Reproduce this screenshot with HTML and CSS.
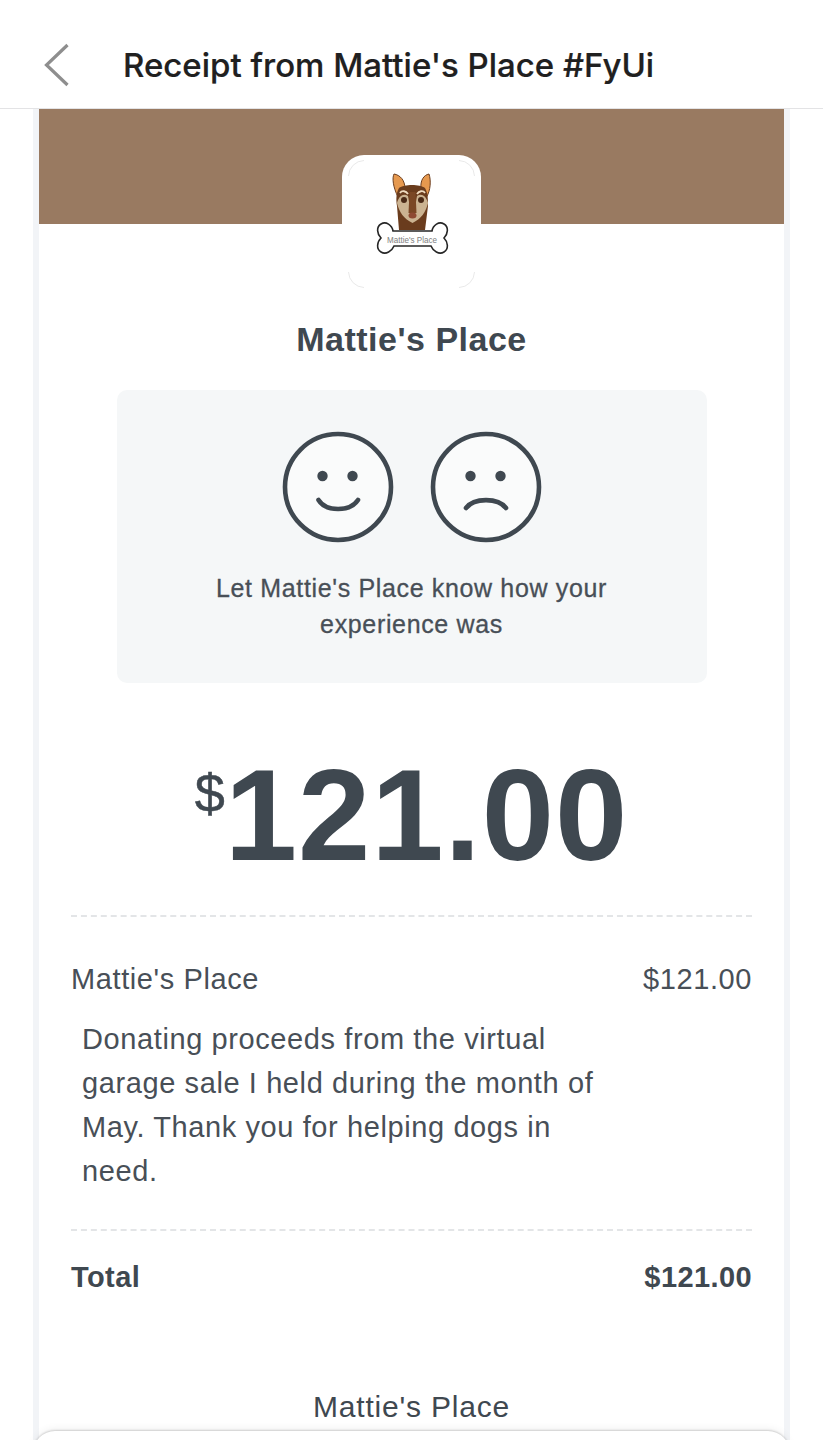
FILE: index.html
```html
<!DOCTYPE html>
<html lang="en">

<head>
    <meta charset="UTF-8">
    <meta name="viewport" content="width=device-width, initial-scale=1.0">
    <title>Receipt from Mattie's Place #FyUi</title>
    <link rel="stylesheet" href="styles.css">
</head>

<body>
    <header class="top-bar">
        <svg class="back-icon" width="26" height="44" viewBox="0 0 26 44">
            <path d="M23.500 2 L2.500 22 L23.500 42" fill="none" stroke="#8e8e8e" stroke-width="3.200" />
        </svg>
        <h1>Receipt from Mattie's Place #FyUi</h1>
    </header>

    <div class="receipt-frame">
        <div class="receipt">
            <div class="banner"></div>
            <div class="logo-box">
                <svg width="127" height="128" viewBox="348 160 127 128">
                    <!-- faint corners of the logo image -->
                    <path d="M348.500 176 A16 16 0 0 1 364 160.500 M459 160.500 A16 16 0 0 1 474.500 176 M474.500 272 A16 16 0 0 1 459 287.500 M364 287.500 A16 16 0 0 1 348.500 272" fill="none" stroke="#e9e9e9" />
                    <!-- bone -->
                    <path d="M393 231 C392 225 386 221 381 224 C376 227 377 234 381 238 C377 242 376 249 381 252 C386 255 392 251 394 246 L431 246 C433 251 439 255 444 252 C449 249 448 242 444 238 C448 234 449 227 444 224 C439 221 433 225 432 231 Z" fill="#fff" stroke="#262626" stroke-width="1.600" />
                    <!-- ears -->
                    <path d="M398 197 C393 187 392 178 394 174 C400 175 405 180 405 189 Z" fill="#e6994f" stroke="#6b3d1e" />
                    <path d="M421 189 C420 180 424 175 429 174 C431 180 431 190 426 198 Z" fill="#e6994f" stroke="#6b3d1e" />
                    <!-- head -->
                    <path d="M399 188 C404 184 420 184 425 188 C428 193 428 200 428 206 L425 230 L399 230 L397 206 C396 200 396 193 399 188 Z" fill="#6a3c1d" />
                    <path d="M397 203 C399 195 404 193 408 196 C409 200 409 204 410 208 L415 208 C416 204 416 200 417 196 C421 193 426 195 428 203 C426 212 421 219 412.500 223 C404 219 399 212 397 203 Z" fill="#cbb391" />
                    <path d="M409.500 192 L415.500 192 L416.500 213 L408.500 213 Z" fill="#7a4724" />
                    <path d="M400 193 C402 190 406 191 408 194 M417 194 C419 191 423 190 425 193" fill="none" stroke="#f0dcc0" stroke-width="1.800" />
                    <circle cx="404" cy="200" r="3" fill="#4a2a16" />
                    <circle cx="421" cy="200" r="3" fill="#4a2a16" />
                    <ellipse cx="412.500" cy="215.500" rx="4" ry="3" fill="#8e4a32" />
                    <!-- name on the bone -->
                    <text class="bone-text" x="387" y="243" textLength="50" lengthAdjust="spacingAndGlyphs">Mattie's Place</text>
                </svg>
            </div>
            <h2 class="merchant-name">Mattie's Place</h2>

            <section class="feedback">
                <div class="faces">
                    <svg width="112" height="112" viewBox="0 0 112 112">
                        <circle cx="56" cy="56" r="53" fill="#fafbfb" stroke="#3f4850" stroke-width="4.600" />
                        <circle cx="40.500" cy="45" r="5.200" fill="#3f4850" />
                        <circle cx="70.500" cy="45" r="5.200" fill="#3f4850" />
                        <path d="M36.500 69 C44 81 68 81 76 69" fill="none" stroke="#3f4850" stroke-width="4.600" stroke-linecap="round" />
                    </svg>
                    <svg width="112" height="112" viewBox="0 0 112 112">
                        <circle cx="56" cy="56" r="53" fill="#fafbfb" stroke="#3f4850" stroke-width="4.600" />
                        <circle cx="40.500" cy="45" r="5.200" fill="#3f4850" />
                        <circle cx="70.500" cy="45" r="5.200" fill="#3f4850" />
                        <path d="M36 77 C44 66.500 68 66.500 76 77" fill="none" stroke="#3f4850" stroke-width="4.600" stroke-linecap="round" />
                    </svg>
                </div>
                <p>Let Mattie's Place know how your<br>experience was</p>
            </section>

            <div class="amount"><span class="currency">$</span>121.00</div>

            <div class="line-item">
                <div class="row">
                    <span>Mattie's Place</span>
                    <span>$121.00</span>
                </div>
                <p class="note">Donating proceeds from the virtual garage sale I held during the month of May. Thank you for helping dogs in need.</p>
            </div>

            <div class="row total">
                <span>Total</span>
                <span>$121.00</span>
            </div>

            <div class="footer-name">Mattie's Place</div>
        </div>
    </div>
    <div class="bottom-sheet"></div>
</body>

</html>
```

FILE: styles.css
```css
html,
body {
    height: 1440px;
    overflow: hidden;
}

body {
    font-family: 'Liberation Sans', Arial, sans-serif;
    margin: 0;
    padding: 0;
    background-color: #fff;
    color: #3f4850;
    position: relative;
}

.top-bar {
    height: 86px;
    border-bottom: 1px solid #e3e3e5;
    display: flex;
    align-items: center;
    padding: 22px 0 0 44px;
}

.top-bar h1 {
    margin: 0 0 0 53px;
    font-family: Inter, sans-serif;
    font-size: 33px;
    font-weight: 500;
    color: #202020;
    white-space: nowrap;
    -webkit-text-stroke: 0.2px #202020;
}

.receipt-frame {
    margin: 0 33px;
    border-left: 6px solid #f2f4f7;
    border-right: 6px solid #f2f4f7;
}

.receipt {
    text-align: center;
    height: 1331px;
}

.banner {
    height: 115px;
    background-color: #997a61;
}

.logo-box {
    width: 139px;
    height: 139px;
    margin: -69px auto 0;
    background-color: #fff;
    border-radius: 22px;
    display: flex;
    justify-content: center;
    padding-top: 5px;
    box-sizing: border-box;
}

.bone-text {
    font-size: 9px;
    fill: #808080;
}

.merchant-name {
    margin: 26px 0 0;
    font-size: 34px;
    line-height: 38px;
    letter-spacing: 0.5px;
    font-weight: bold;
}

.feedback {
    width: 590px;
    height: 293px;
    margin: 32px auto 0;
    background-color: #f5f7f8;
    border-radius: 10px;
    box-sizing: border-box;
    padding-top: 41px;
}

.faces {
    display: flex;
    justify-content: center;
    gap: 36px;
}

.feedback p {
    margin: 27px 0 0;
    font-size: 25px;
    line-height: 36px;
    letter-spacing: 0.65px;
    color: #484f57;
    -webkit-text-stroke: 0.3px #484f57;
}

.amount {
    margin-top: 57px;
    font-size: 130px;
    line-height: 150px;
    font-weight: bold;
    letter-spacing: 1px;
    display: flex;
    justify-content: center;
}

.currency {
    font-size: 54px;
    font-weight: normal;
    line-height: 106px;
    letter-spacing: 0;
    -webkit-text-stroke: 0.5px #3f4850;
}

.line-item {
    margin: 25px 32px 0;
    padding: 44px 0 36px;
    border-top: 2px dashed #e3e5e7;
    border-bottom: 2px dashed #e3e5e7;
    color: #484f57;
}

.row {
    display: flex;
    justify-content: space-between;
    font-size: 29px;
    line-height: 36px;
    letter-spacing: 0.6px;
    margin: 0 32px;
}

.line-item .row {
    margin: 0;
}

.note {
    margin: 20px 150px 0 11px;
    text-align: left;
    font-size: 29px;
    line-height: 44px;
    letter-spacing: 0.6px;
}

.total {
    margin-top: 28px;
    font-weight: bold;
    letter-spacing: 0.4px;
}

.footer-name {
    margin-top: 94px;
    font-size: 30px;
    line-height: 36px;
    letter-spacing: 0.8px;
}

.bottom-sheet {
    position: absolute;
    left: 33px;
    right: 33px;
    top: 1431px;
    height: 40px;
    background-color: #fff;
    border-radius: 22px 22px 0 0;
    box-shadow: 0 -1px 2px rgba(0, 0, 0, 0.16), 0 -2px 8px rgba(0, 0, 0, 0.06);
}
```
